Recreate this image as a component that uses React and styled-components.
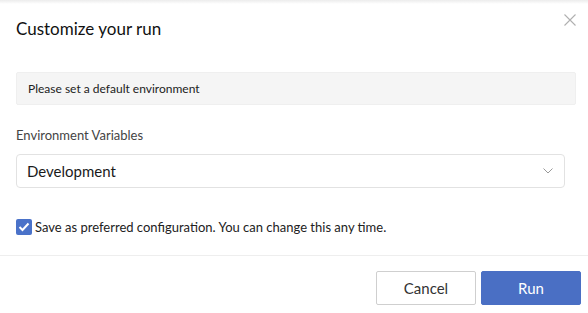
import styled, { createGlobalStyle } from 'styled-components'

const Global = createGlobalStyle`
    body {
        margin: 0;
        background: #fff;
        font-family: Lato, "Open Sans", sans-serif;
    }
`

const Dialog = styled.div`
    width: 588px;
    height: 313px;
    box-sizing: border-box;
    display: flex;
    flex-direction: column;
    background: linear-gradient(#ececec, #fff 4px);
    overflow: hidden;
`

const Header = styled.div`
    display: flex;
    justify-content: space-between;
    align-items: flex-start;
    padding: 18px 12px 0 16px;
`

const Title = styled.h2`
    margin: 0;
    font-size: 17px;
    line-height: 22px;
    font-weight: 400;
    color: #111;
`

const Close = styled.button`
    border: 0;
    background: none;
    padding: 0;
    margin-top: -4px;
    width: 12px;
    height: 12px;
    display: flex;
    cursor: pointer;
`

const Body = styled.div`
    display: flex;
    flex-direction: column;
    padding: 32px 12px 0 16px;
`

const Notice = styled.div`
    height: 33px;
    box-sizing: border-box;
    padding: 0 11px;
    background: #f5f5f5;
    border: 1px solid #efefef;
    border-radius: 2px;
    font-size: 12px;
    line-height: 31px;
    color: #222;
`

const Label = styled.label`
    margin-top: 22px;
    font-size: 13px;
    line-height: 17px;
    color: #444;
`

const Select = styled.div`
    margin-top: 10px;
    margin-right: 11px;
    height: 34px;
    box-sizing: border-box;
    border: 1px solid #e2e2e2;
    border-radius: 4px;
    display: flex;
    align-items: center;
    justify-content: space-between;
    padding: 0 11px 0 10px;
    font-size: 15px;
    line-height: 32px;
    color: #1a1a1a;
`

const CheckRow = styled.div`
    margin-top: 31px;
    display: flex;
    align-items: center;
    gap: 3px;
    font-size: 13px;
    line-height: 16px;
    color: #222;
`

const Box = styled.span`
    width: 16px;
    height: 16px;
    border-radius: 2px;
    background: #4a72c9;
    display: flex;
    align-items: center;
    justify-content: center;
`

const Footer = styled.div`
    margin-top: auto;
    border-top: 1px solid #eeeeee;
    display: flex;
    justify-content: flex-end;
    gap: 5px;
    padding: 15px 7px 8px 0;
`

const Button = styled.button`
    width: 100px;
    height: 34px;
    box-sizing: border-box;
    border-radius: 2px;
    font-family: inherit;
    font-size: 15px;
    border: 1px solid ${(props) => (props.primary ? '#4a6fc4' : '#cfcfcf')};
    background: ${(props) => (props.primary ? '#4a6fc4' : '#fff')};
    color: ${(props) => (props.primary ? '#fff' : '#333')};
    cursor: pointer;
`

const App = () => {
    return (
        <>
            <Global />
            <Dialog>
                <Header>
                    <Title>Customize your run</Title>
                    <Close aria-label="Close">
                        <svg width="12" height="12" viewBox="0 0 12 12">
                            <path d="M0.5 0.5 L11.5 11.5 M11.5 0.5 L0.5 11.5" stroke="#b0b0b0" strokeWidth="1.1" />
                        </svg>
                    </Close>
                </Header>
                <Body>
                    <Notice>Please set a default environment</Notice>
                    <Label>Environment Variables</Label>
                    <Select>
                        <span>Development</span>
                        <svg width="10" height="6" viewBox="0 0 10 6">
                            <path d="M0.5 0.5 L5 5 L9.5 0.5" fill="none" stroke="#999" strokeWidth="1" />
                        </svg>
                    </Select>
                    <CheckRow>
                        <Box>
                            <svg width="12" height="10" viewBox="0 0 12 10">
                                <path d="M1.5 5 L4.5 8 L10.5 1.5" fill="none" stroke="#fff" strokeWidth="2" />
                            </svg>
                        </Box>
                        <span>Save as preferred configuration. You can change this any time.</span>
                    </CheckRow>
                </Body>
                <Footer>
                    <Button>Cancel</Button>
                    <Button primary>Run</Button>
                </Footer>
            </Dialog>
        </>
    )
}

export default App
